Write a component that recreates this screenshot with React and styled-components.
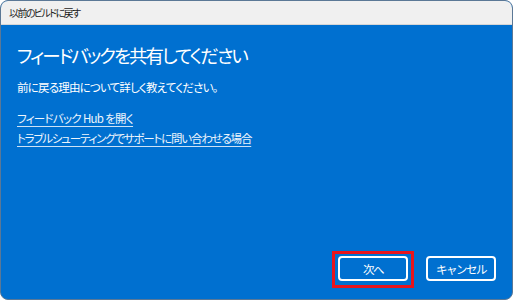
import styled, { createGlobalStyle } from 'styled-components';

const Global = createGlobalStyle`
    html, body {
        margin: 0;
        padding: 0;
        background: #ffffff;
    }
    body {
        font-family: "Noto Sans CJK JP", "Noto Sans", sans-serif;
        font-feature-settings: "palt";
    }
`;

const Window = styled.div`
    box-sizing: border-box;
    width: 513px;
    height: 300px;
    display: flex;
    flex-direction: column;
    border: 1px solid #5b7896;
    border-radius: 8px;
    overflow: hidden;
    background: #0070d0;
`;

const TitleBar = styled.div`
    height: 23px;
    flex: none;
    display: flex;
    align-items: center;
    padding-left: 8px;
    background: #f0f0f0;
    border-bottom: 1px solid #d6d6d6;
    font-size: 10px;
    letter-spacing: -1.6px;
    color: #1b1b1b;
`;

const Body = styled.div`
    flex: 1;
    display: flex;
    flex-direction: column;
    padding: 16px 16px 18px 16px;
    color: #ffffff;
`;

const Heading = styled.h1`
    margin: 0;
    font-size: 18.5px;
    font-weight: 400;
    line-height: 28px;
    letter-spacing: -2px;
`;

const Text = styled.p`
    margin: 9px 0 12px 0;
    font-size: 11.5px;
    line-height: 18px;
    letter-spacing: -0.8px;
`;

const Link = styled.a`
    display: block;
    align-self: flex-start;
    font-size: 11.5px;
    line-height: 20px;
    letter-spacing: ${p => p.$tight ? '-1.2px' : '-0.7px'};
    color: #eef5fc;
    text-decoration: underline;
    text-decoration-color: #cde2f6;
    text-underline-offset: 3px;
    cursor: pointer;
`;

const Footer = styled.div`
    margin-top: auto;
    display: flex;
    justify-content: flex-end;
    gap: 18px;
`;

const Button = styled.button`
    box-sizing: border-box;
    width: 70px;
    height: 25px;
    border: 2px solid #ffffff;
    border-radius: 4px;
    background: transparent;
    color: #ffffff;
    font-family: inherit;
    font-size: 11.5px;
    letter-spacing: -1.5px;
    padding: 0;
    cursor: pointer;
`;

const Highlight = styled.span`
    position: relative;
    display: inline-flex;

    &::after {
        content: '';
        position: absolute;
        left: -6px;
        right: -6px;
        top: -5px;
        bottom: -7px;
        border: 3px solid #e8141c;
        pointer-events: none;
    }
`;

export default function App() {
    return (
        <>
            <Global />
            <Window>
                <TitleBar>以前のビルドに戻す</TitleBar>
                <Body>
                    <Heading>フィードバックを共有してください</Heading>
                    <Text>前に戻る理由について詳しく教えてください。</Text>
                    <Link>フィードバック Hub を開く</Link>
                    <Link $tight>トラブルシューティングでサポートに問い合わせる場合</Link>
                    <Footer>
                        <Highlight>
                            <Button>次へ</Button>
                        </Highlight>
                        <Button>キャンセル</Button>
                    </Footer>
                </Body>
            </Window>
        </>
    );
}
